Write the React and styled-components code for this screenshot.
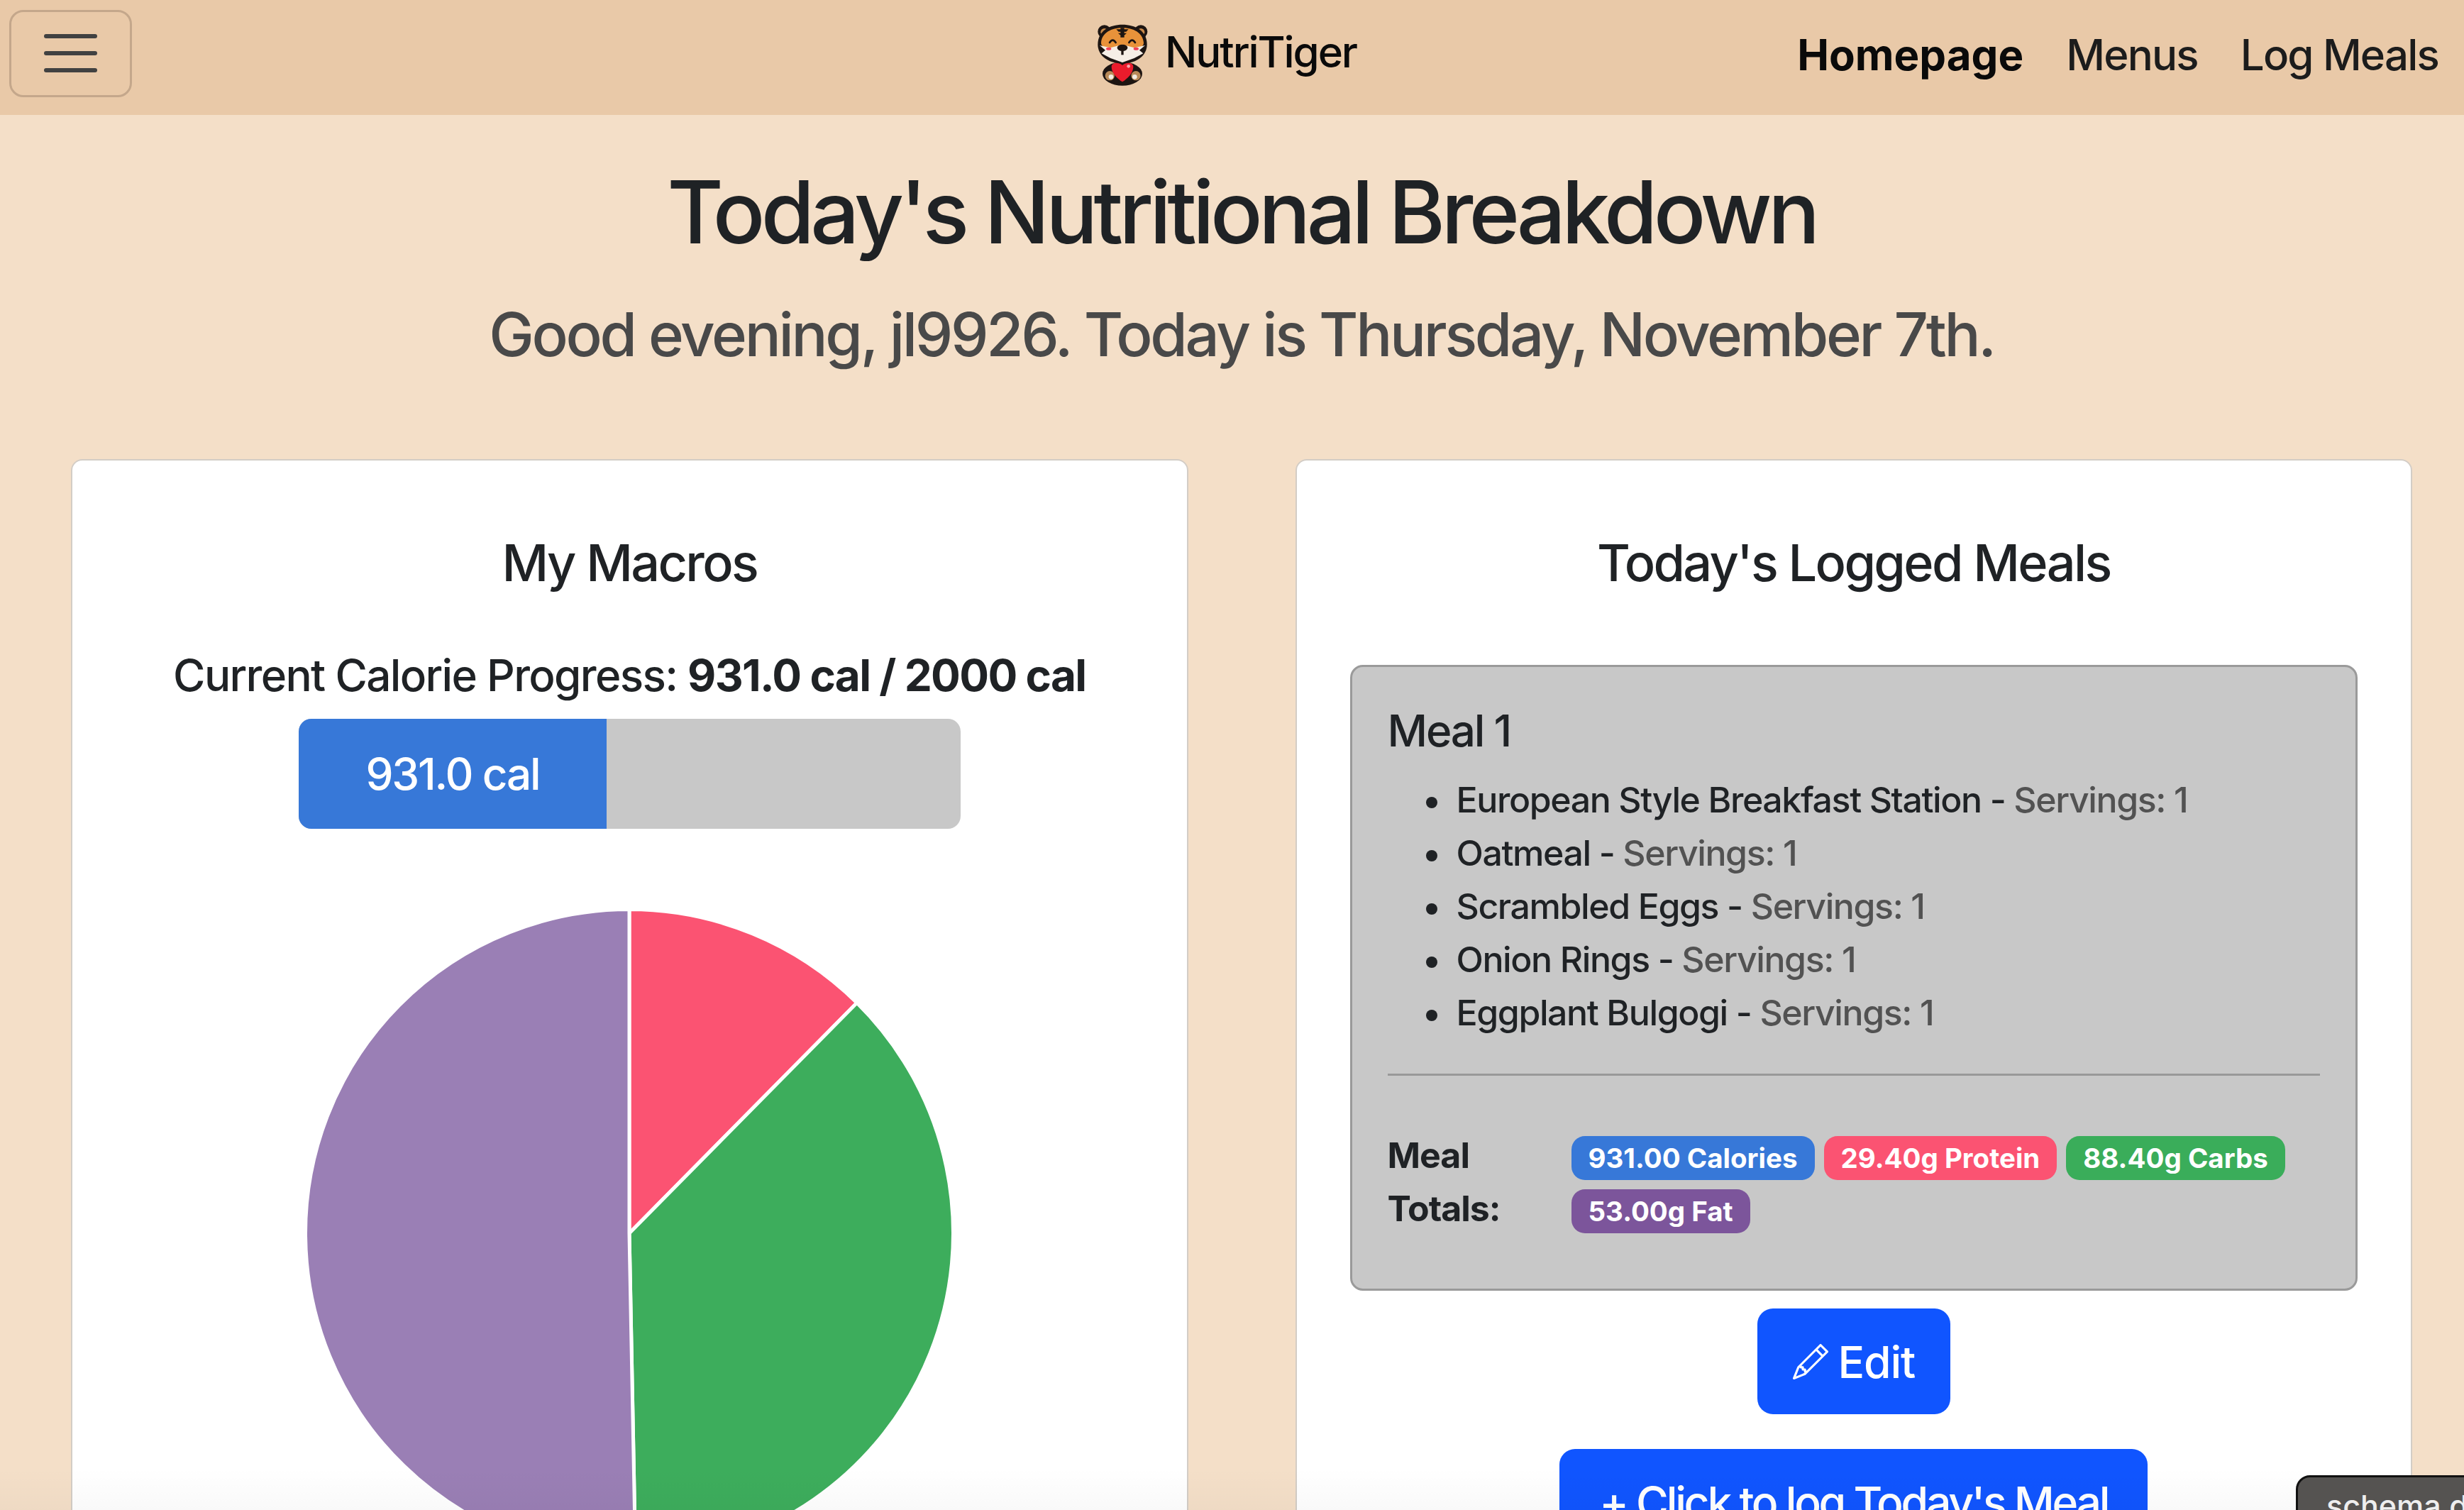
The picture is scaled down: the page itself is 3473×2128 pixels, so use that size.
import styled, { createGlobalStyle } from "styled-components";
import { BsPencil } from "react-icons/bs";

const GlobalStyle = createGlobalStyle`
  html, body {
    margin: 0;
    height: 100%;
    overflow: hidden;
  }
  body {
    background: #f4dfc8;
    color: #1f2225;
    font-family: Inter, "Noto Sans", sans-serif;
    font-size: 50px;
    font-weight: 450;
    line-height: 1.5;
  }
  * {
    box-sizing: border-box;
  }
`;

const Page = styled.div`
  position: relative;
  height: 2128px;
  overflow: hidden;
`;

const Navbar = styled.nav`
  display: grid;
  grid-template-columns: 1fr auto 1fr;
  align-items: center;
  height: 162px;
  padding: 0 36px 0 13px;
  background: #e9c9a8;
`;

const MenuToggle = styled.button`
  display: flex;
  flex-direction: column;
  justify-content: center;
  align-items: center;
  gap: 18px;
  width: 173px;
  height: 123px;
  margin-top: -12px;
  padding: 0;
  background: transparent;
  border: 3px solid #c4a78b;
  border-radius: 20px;
`;

const ToggleLine = styled.span`
  width: 75px;
  height: 6px;
  border-radius: 3px;
  background: #414141;
`;

const Brand = styled.a`
  display: flex;
  align-items: center;
  gap: 20px;
  margin-top: -8px;
  margin-left: 8px;
  color: #0a0a0a;
`;

const BrandName = styled.span`
  margin-top: -8px;
  font-size: 60px;
  letter-spacing: -0.035em;
`;

const NavLinks = styled.div`
  display: flex;
  justify-content: flex-end;
  gap: 60px;
  margin-top: -8px;
`;

const NavLink = styled.a`
  font-size: 60px;
  font-weight: ${(p) => (p.$active ? 700 : 450)};
  letter-spacing: ${(p) => (p.$active ? "0" : "-0.03em")};
  color: ${(p) => (p.$active ? "#0a0a0a" : "#1c1c1c")};
`;

const Main = styled.main`
  padding: 0 73px 0 100px;
  text-align: center;
`;

const Title = styled.h1`
  margin: 64px 0 0;
  font-size: 122px;
  font-weight: 500;
  line-height: 146px;
  letter-spacing: -0.047em;
`;

const Subtitle = styled.h2`
  margin: 49px 0 0;
  font-size: 85px;
  font-weight: 500;
  line-height: 102px;
  letter-spacing: -0.039em;
  color: #494949;
`;

const Columns = styled.div`
  display: grid;
  grid-template-columns: 1fr 1fr;
  gap: 151px;
  margin-top: 124px;
`;

const Card = styled.section`
  height: 1600px;
  padding: 101px 75px 0;
  background: #fff;
  border: 2px solid #d3cdc6;
  border-radius: 16px;
`;

const CardTitle = styled.h3`
  margin: 0;
  font-size: 72px;
  font-weight: 500;
  line-height: 86px;
  letter-spacing: -0.037em;
`;

const CalorieLine = styled.p`
  margin: 78px 0 0;
  font-size: 62px;
  line-height: 75px;
  letter-spacing: -0.027em;
`;

const Strong = styled.b`
  font-weight: 700;
`;

const ProgressTrack = styled.div`
  display: flex;
  width: 933px;
  height: 155px;
  margin: 24px auto 0;
  overflow: hidden;
  background: #c8c8c8;
  border-radius: 18px;
`;

const ProgressFill = styled.div`
  display: flex;
  align-items: center;
  justify-content: center;
  background: #3778d8;
  color: #fff;
  font-size: 62px;
  letter-spacing: -0.035em;
`;

const PieChart = styled.svg`
  display: block;
  width: 928px;
  height: 928px;
  margin: 106px auto 0;
`;

const MealBox = styled.div`
  margin-top: 101px;
  padding: 50px 50px 75px;
  text-align: left;
  background: #c8c8c8;
  border: 3px solid #9a9a9a;
  border-radius: 18px;
`;

const MealName = styled.h5`
  margin: 2px 0 23px;
  font-size: 62px;
  font-weight: 500;
  line-height: 75px;
  letter-spacing: -0.035em;
`;

const FoodList = styled.ul`
  margin: 0 0 48px;
  padding-left: 97px;
  list-style: none;
`;

const FoodItem = styled.li`
  line-height: 75px;
  letter-spacing: -0.028em;

  &::before {
    content: "";
    display: inline-block;
    width: 16px;
    height: 16px;
    margin: 0 27px 0 -43px;
    border-radius: 50%;
    background: #1f2225;
    vertical-align: middle;
  }
`;

const Servings = styled.span`
  color: #525252;
`;

const Divider = styled.hr`
  margin: 0 0 75px;
  border: 0;
  border-top: 3px solid #999;
`;

const Totals = styled.div`
  display: grid;
  grid-template-columns: 259px 1fr;
`;

const TotalsLabel = styled.div`
  font-weight: 700;
  letter-spacing: -0.02em;
`;

const Badges = styled.div`
  display: flex;
  flex-wrap: wrap;
  align-content: flex-start;
  gap: 13px;
  padding-top: 10px;
`;

const Badge = styled.span`
  height: 62px;
  padding: 0 24px;
  background: ${(p) => p.$color};
  border-radius: 19px;
  color: #fff;
  font-size: 38.5px;
  font-weight: 700;
  line-height: 62px;
`;

const ButtonStack = styled.div`
  display: flex;
  flex-direction: column;
  align-items: center;
`;

const PrimaryButton = styled.button`
  display: flex;
  align-items: center;
  justify-content: center;
  gap: 14px;
  height: 149px;
  margin-top: ${(p) => p.$top}px;
  padding: 0 ${(p) => p.$pad}px;
  background: #1055ff;
  border: 0;
  border-radius: 22px;
  color: #fff;
  font-family: inherit;
  font-size: 62.5px;
  font-weight: 450;
  letter-spacing: ${(p) => p.$spacing}px;
`;

const Toast = styled.div`
  position: absolute;
  left: 3236px;
  top: 2079px;
  width: 300px;
  height: 120px;
  padding: 8px 0 0 40px;
  background: #555351;
  border: 3px solid #111;
  border-radius: 20px;
  color: #eee;
  font-size: 43px;
  white-space: nowrap;
`;

const BottomFade = styled.div`
  position: absolute;
  left: 0;
  right: 0;
  bottom: 0;
  height: 60px;
  background: linear-gradient(rgba(0, 0, 0, 0), rgba(0, 0, 0, 0.025));
  pointer-events: none;
`;

const TigerLogo = () => (
  <svg width="76" height="90" viewBox="0 0 228 270">
    <circle cx="32" cy="38" r="28" fill="#1d1512" />
    <circle cx="186" cy="38" r="28" fill="#1d1512" />
    <circle cx="32" cy="40" r="16" fill="#c98a4b" />
    <circle cx="186" cy="40" r="16" fill="#c98a4b" />
    <ellipse cx="108" cy="216" rx="84" ry="50" fill="#1d1512" />
    <circle cx="55" cy="224" r="20" fill="#b98a58" />
    <circle cx="165" cy="224" r="20" fill="#b98a58" />
    <circle cx="60" cy="229" r="10" fill="#f3ece2" />
    <circle cx="160" cy="229" r="10" fill="#f3ece2" />
    <path d="M4 92 C4 34 54 8 108 8 C162 8 212 34 212 92 C212 136 172 172 108 172 C44 172 4 136 4 92Z" fill="#1d1512" />
    <path d="M18 84 C22 42 62 22 108 22 C154 22 194 42 198 84 C200 104 172 112 108 110 C44 112 16 104 18 84Z" fill="#e8923a" />
    <path d="M12 96 L58 106 L108 92 L158 106 L204 96 L180 116 L196 130 L158 150 L108 168 L58 150 L20 130 L36 116Z" fill="#f6efe7" />
    <path d="M82 28 H134 L124 38 H92Z M90 44 H126 L118 52 H98Z M100 22 H116 V62 H100Z" fill="#1d1512" />
    <path d="M54 84 Q67 64 80 84 M136 84 Q149 64 162 84" fill="none" stroke="#1d1512" strokeWidth="8" strokeLinecap="round" />
    <ellipse cx="50" cy="110" rx="11" ry="6" fill="#f0405a" />
    <ellipse cx="166" cy="110" rx="11" ry="6" fill="#f0405a" />
    <ellipse cx="108" cy="106" rx="22" ry="14" fill="#1d1512" />
    <path d="M108 118 V136" stroke="#1d1512" strokeWidth="10" />
    <path d="M62 186 C62 168 90 164 108 180 C126 164 154 168 154 186 C154 214 128 238 108 250 C88 238 62 214 62 186Z" fill="#ea1c2c" />
    <circle cx="134" cy="184" r="7" fill="#f7a7ae" />
  </svg>
);

const macros = [
  { name: "Protein", cal: 117.6, color: "#fb5372" },
  { name: "Carbs", cal: 353.6, color: "#3dad5c" },
  { name: "Fat", cal: 477, color: "#9a7fb5" },
];

const RADIUS = 456.5;
const CENTER = 464;

const polar = (deg) => {
  const rad = ((deg - 90) * Math.PI) / 180;
  return [CENTER + RADIUS * Math.cos(rad), CENTER + RADIUS * Math.sin(rad)];
};

const MacroPie = () => {
  const total = macros.reduce((sum, m) => sum + m.cal, 0);
  let angle = 0;
  return (
    <PieChart viewBox="0 0 928 928">
      {macros.map((m) => {
        const start = polar(angle);
        angle += (m.cal / total) * 360;
        const end = polar(angle);
        const large = (m.cal / total) * 360 > 180 ? 1 : 0;
        return (
          <path
            key={m.name}
            d={`M${CENTER} ${CENTER} L${start[0]} ${start[1]} A${RADIUS} ${RADIUS} 0 ${large} 1 ${end[0]} ${end[1]}Z`}
            fill={m.color}
            stroke="#fff"
            strokeWidth="5"
          />
        );
      })}
    </PieChart>
  );
};

const foods = [
  "European Style Breakfast Station",
  "Oatmeal",
  "Scrambled Eggs",
  "Onion Rings",
  "Eggplant Bulgogi",
];

const App = () => {
  return (
    <Page>
      <GlobalStyle />
      <Navbar>
        <MenuToggle>
          <ToggleLine />
          <ToggleLine />
          <ToggleLine />
        </MenuToggle>
        <Brand>
          <TigerLogo />
          <BrandName>NutriTiger</BrandName>
        </Brand>
        <NavLinks>
          <NavLink $active>Homepage</NavLink>
          <NavLink>Menus</NavLink>
          <NavLink>Log Meals</NavLink>
        </NavLinks>
      </Navbar>
      <Main>
        <Title>Today's Nutritional Breakdown</Title>
        <Subtitle>Good evening, jl9926. Today is Thursday, November 7th.</Subtitle>
        <Columns>
          <Card>
            <CardTitle>My Macros</CardTitle>
            <CalorieLine>
              Current Calorie Progress: <Strong>931.0 cal / 2000 cal</Strong>
            </CalorieLine>
            <ProgressTrack>
              <ProgressFill style={{ width: `${(931 / 2000) * 100}%` }}>931.0 cal</ProgressFill>
            </ProgressTrack>
            <MacroPie />
          </Card>
          <Card>
            <CardTitle>Today's Logged Meals</CardTitle>
            <MealBox>
              <MealName>Meal 1</MealName>
              <FoodList>
                {foods.map((food) => (
                  <FoodItem key={food}>
                    {food} - <Servings>Servings: 1</Servings>
                  </FoodItem>
                ))}
              </FoodList>
              <Divider />
              <Totals>
                <TotalsLabel>
                  Meal
                  <br />
                  Totals:
                </TotalsLabel>
                <Badges>
                  <Badge $color="#3778d8">931.00 Calories</Badge>
                  <Badge $color="#fb5372">29.40g Protein</Badge>
                  <Badge $color="#3aad5a">88.40g Carbs</Badge>
                  <Badge $color="#7c559b">53.00g Fat</Badge>
                </Badges>
              </Totals>
            </MealBox>
            <ButtonStack>
              <PrimaryButton $top={25} $pad={50} $spacing={-1.25}>
                <BsPencil size={50} />
                Edit
              </PrimaryButton>
              <PrimaryButton $top={49} $pad={56} $spacing={-3.28}>
                + Click to log Today's Meal
              </PrimaryButton>
            </ButtonStack>
          </Card>
        </Columns>
      </Main>
      <BottomFade />
      <Toast>schema d</Toast>
    </Page>
  );
};

export default App;
